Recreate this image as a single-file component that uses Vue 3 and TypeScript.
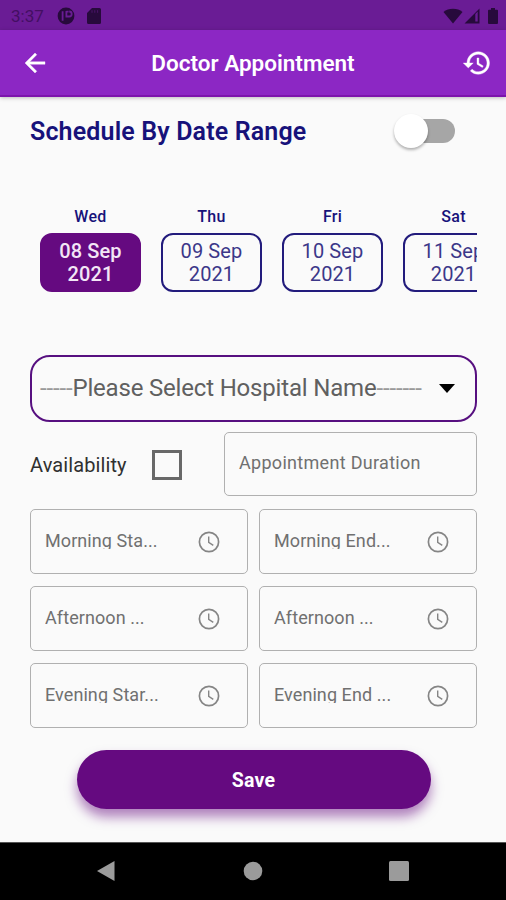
<script setup lang="ts">
import { ref } from 'vue'

interface Day {
  name: string
  date: string
  year: string
}

const days: Day[] = [
  { name: 'Wed', date: '08 Sep', year: '2021' },
  { name: 'Thu', date: '09 Sep', year: '2021' },
  { name: 'Fri', date: '10 Sep', year: '2021' },
  { name: 'Sat', date: '11 Sep', year: '2021' },
]

const timeFields: string[] = [
  'Morning Sta...',
  'Morning End...',
  'Afternoon ...',
  'Afternoon ...',
  'Evening Star...',
  'Evening End ...',
]

const selectedDay = ref(0)
const available = ref(false)
</script>

<template>
  <div class="screen">
    <div class="status-bar">
      <span class="clock">3:37</span>
      <svg class="app-dot" viewBox="0 0 18 18">
        <circle cx="9" cy="9" r="8.4" fill="#270a3c" />
        <path d="M5.600 4.200v9.600M9.400 4.600h2.200M9.400 4v5.500h2.800a2.200 2.200 0 0 0 0-5" fill="none" stroke="#6a1c95" stroke-width="1.800" />
      </svg>
      <svg class="sd" viewBox="0 0 14 16">
        <path d="M5 0h7.5A1.5 1.5 0 0 1 14 1.500V14.500A1.500 1.500 0 0 1 12.500 16h-11A1.500 1.500 0 0 1 0 14.500V5z" fill="#270a3c" />
        <path d="M5 2.200v2.600M7.800 2.200v2.600M10.600 2.200v2.600" stroke="#4a1468" stroke-width="1" />
      </svg>
      <span class="grow"></span>
      <svg class="wifi" viewBox="0 0 20 16">
        <path d="M10 15.500L.5 4C3 1.800 6.300.7 10 .7s7 1.100 9.500 3.300z" fill="#270a3c" />
      </svg>
      <svg class="signal" viewBox="0 0 16 16">
        <path fill-rule="evenodd" d="M15.500.5v15H.5zM11.300 6v7.600h2.400V3.600z" fill="#270a3c" />
      </svg>
      <svg class="battery" viewBox="0 0 10 16">
        <path d="M3 0h4v1.700h2a1 1 0 0 1 1 1V15a1 1 0 0 1-1 1H1a1 1 0 0 1-1-1V2.700a1 1 0 0 1 1-1h2z" fill="#270a3c" />
      </svg>
    </div>

    <header class="app-bar">
      <svg class="back" viewBox="0 0 24 24"><path d="M20 11H7.830l5.590-5.590L12 4l-8 8 8 8 1.410-1.410L7.830 13H20v-2z" fill="#fff" stroke="#fff" stroke-width=".3" /></svg>
      <h1>Doctor Appointment</h1>
      <svg class="history" viewBox="0 0 24 24"><path d="M13 3c-4.970 0-9 4.030-9 9H1l3.890 3.890.07.14L9 12H6c0-3.870 3.130-7 7-7s7 3.130 7 7-3.130 7-7 7c-1.930 0-3.680-.79-4.940-2.060l-1.420 1.420C8.270 19.990 10.510 21 13 21c4.970 0 9-4.030 9-9s-4.030-9-9-9zm-1 5v5l4.280 2.540.72-1.210-3.500-2.080V8H12z" fill="#fff" stroke="#fff" stroke-width=".3" /></svg>
    </header>

    <main>
      <section class="range">
        <h2>Schedule By Date Range</h2>
        <div class="switch"><span class="thumb"></span></div>
      </section>

      <section class="days">
        <div v-for="(day, i) in days" :key="day.name" class="day" @click="selectedDay = i">
          <span class="day-name">{{ day.name }}</span>
          <div class="day-box" :class="{ selected: i === selectedDay }">
            <span>{{ day.date }}</span>
            <span>{{ day.year }}</span>
          </div>
        </div>
      </section>

      <section class="hospital">
        <span class="dashes">-----</span><span class="hospital-text">Please Select Hospital Name</span><span class="dashes">-------</span>
        <svg class="caret" viewBox="0 0 16 9"><path d="M0 0h16L8 9z" fill="#000" /></svg>
      </section>

      <section class="availability">
        <span class="availability-text">Availability</span>
        <span class="checkbox" :class="{ checked: available }" @click="available = !available"></span>
        <div class="duration"><span>Appointment Duration</span></div>
      </section>

      <section class="times">
        <div v-for="(label, i) in timeFields" :key="i" class="time-field">
          <span class="time-label">{{ label }}</span>
          <svg viewBox="0 0 22 22">
            <circle cx="11" cy="11" r="9.600" fill="none" stroke="#858585" stroke-width="1.700" />
            <path d="M10.700 5.500v5.800l4.600 3" fill="none" stroke="#858585" stroke-width="1.400" />
          </svg>
        </div>
      </section>

      <button class="save" type="button">Save</button>
    </main>

    <nav class="nav-bar">
      <svg viewBox="0 0 20 22"><path d="M1 11L18.500 1v20z" fill="#9b9b9b" /></svg>
      <svg viewBox="0 0 20 20"><circle cx="10" cy="10" r="9.300" fill="#9b9b9b" /></svg>
      <svg viewBox="0 0 20 20"><rect width="20" height="20" rx="1.500" fill="#9b9b9b" /></svg>
    </nav>
  </div>
</template>

<style>
body {
  margin: 0;
}
</style>

<style scoped>
.screen {
  width: 506px;
  height: 900px;
  display: flex;
  flex-direction: column;
  overflow: hidden;
  background: #fafafa;
  font-family: Roboto, 'Liberation Sans', sans-serif;
}
.screen * {
  box-sizing: border-box;
}
svg {
  display: block;
  flex: none;
}
.status-bar {
  flex: none;
  height: 30px;
  padding: 1px 8px 0 11px;
  display: flex;
  align-items: center;
  background: #6a1c95;
}
.clock {
  width: 46px;
  font-size: 17px;
  color: #430f62;
}
.app-dot {
  width: 18px;
  height: 18px;
}
.sd {
  width: 14px;
  height: 16px;
  margin-left: 12px;
}
.grow {
  flex: 1;
}
.wifi {
  width: 20px;
  height: 16px;
}
.signal {
  width: 16px;
  height: 16px;
  margin-left: 1px;
}
.battery {
  width: 10px;
  height: 16px;
  margin-left: 8px;
}
.app-bar {
  flex: none;
  height: 67px;
  padding: 1px 14px 0 20px;
  display: flex;
  align-items: center;
  background: #8c27c4;
  border-bottom: 2px solid #7c14ac;
  box-shadow: 0 1px 4px rgba(0, 0, 0, 0.25);
}
.back {
  width: 30px;
  height: 30px;
}
h1 {
  flex: 1;
  margin: 0;
  padding-right: 6px;
  text-align: center;
  font-size: 22.500px;
  font-weight: 600;
  letter-spacing: 0;
  color: #fff;
}
.history {
  width: 30px;
  height: 30px;
}
main {
  flex: 1;
  padding: 0 29px 0 30px;
  display: flex;
  flex-direction: column;
}
.range {
  height: 68px;
  padding-right: 22px;
  display: flex;
  align-items: center;
  justify-content: space-between;
}
h2 {
  margin: 0;
  font-size: 25px;
  font-weight: 600;
  letter-spacing: 0.150px;
  color: #17127a;
}
.switch {
  width: 57px;
  height: 24px;
  display: flex;
  align-items: center;
  border-radius: 12px;
  background: #a6a6a6;
}
.thumb {
  width: 34px;
  height: 34px;
  margin-left: -4px;
  border-radius: 50%;
  background: #fff;
  box-shadow: 0 2px 3px rgba(0, 0, 0, 0.3);
}
.days {
  margin-top: 41px;
  padding-left: 10px;
  display: flex;
  gap: 20px;
  overflow: hidden;
}
.day {
  flex: none;
  width: 101px;
}
.day-name {
  display: block;
  height: 27px;
  line-height: 21px;
  font-size: 16px;
  font-weight: 500;
  letter-spacing: 0.300px;
  text-align: center;
  color: #17127a;
}
.day-box {
  height: 59px;
  display: flex;
  flex-direction: column;
  align-items: center;
  justify-content: center;
  border: 2px solid #221b7c;
  border-radius: 12px;
  font-size: 20px;
  line-height: 23px;
  letter-spacing: 0.100px;
  color: #3c3789;
}
.day-box.selected {
  border-color: #650a80;
  background: #650a80;
  font-weight: 500;
  color: #f3e6f6;
}
.hospital {
  height: 67px;
  margin-top: 63px;
  padding: 0 20px 1px 8px;
  display: flex;
  align-items: center;
  border: 2px solid #571080;
  border-radius: 20px;
  font-size: 24px;
  color: #606060;
}
.hospital-text {
  letter-spacing: -0.180px;
}
.dashes {
  color: #999;
  letter-spacing: -0.150px;
}
.caret {
  width: 16px;
  height: 9px;
  margin-left: auto;
}
.availability {
  height: 64px;
  margin-top: 10px;
  display: flex;
  align-items: center;
}
.availability-text {
  width: 122px;
  padding-top: 2px;
  font-size: 20px;
  letter-spacing: 0.100px;
  color: #303030;
}
.checkbox {
  width: 30px;
  height: 30px;
  margin-top: 2px;
  border: 3px solid #686868;
}
.checkbox.checked {
  background: #650a80;
}
.duration {
  width: 253px;
  height: 64px;
  margin-left: auto;
  padding: 0 14px 3px;
  display: flex;
  align-items: center;
  border: 1.500px solid #b0b0b0;
  border-radius: 5px;
  font-size: 18px;
  letter-spacing: 0.300px;
  color: #707070;
}
.times {
  margin-top: 13px;
  display: grid;
  grid-template-columns: 218px 218px;
  grid-auto-rows: 64.500px;
  gap: 12.700px 11px;
}
.time-field {
  padding: 0 27px 0 14px;
  display: flex;
  align-items: center;
  justify-content: space-between;
  border: 1.500px solid #b0b0b0;
  border-radius: 5px;
}
.time-label {
  height: 16px;
  margin-top: -1px;
  overflow: hidden;
  font-size: 18px;
  line-height: 15px;
  letter-spacing: 0.080px;
  white-space: nowrap;
  color: #707070;
}
.time-field svg {
  width: 22px;
  height: 22px;
  margin-top: 1px;
}
.save {
  align-self: center;
  width: 354px;
  height: 59px;
  margin-top: 22px;
  padding: 2px 0 0;
  border: 0;
  border-radius: 30px;
  background: #650a80;
  box-shadow: 0 8px 12px rgba(101, 10, 128, 0.500);
  font: 700 19.500px Roboto, 'Liberation Sans', sans-serif;
  letter-spacing: 0.200px;
  color: #fff;
}
.nav-bar {
  flex: none;
  height: 58px;
  padding: 0 97px 2px 96px;
  display: flex;
  align-items: center;
  justify-content: space-between;
  border-top: 1px solid #555;
  background: #000;
}
.nav-bar svg {
  width: 20px;
}
</style>
